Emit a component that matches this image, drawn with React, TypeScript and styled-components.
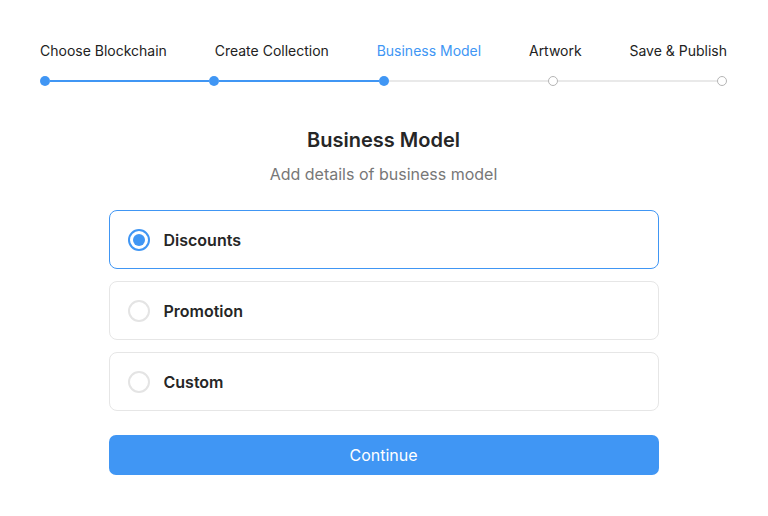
import { Fragment } from "react";
import styled, { createGlobalStyle } from "styled-components";

const BLUE = "#4096f4";

const GlobalStyle = createGlobalStyle`
  body {
    margin: 0;
    background: #ffffff;
    font-family: Inter, "Noto Sans", sans-serif;
    color: #222222;
  }
`;

const Page = styled.div`
  width: 768px;
  height: 516px;
  box-sizing: border-box;
  padding: 41px 41px 0 40px;
`;

const Labels = styled.div`
  display: flex;
  justify-content: space-between;
`;

const StepLabel = styled.span<{ $active: boolean }>`
  font-size: 14px;
  line-height: 20px;
  color: ${({ $active }) => ($active ? BLUE : "#222222")};
`;

const Track = styled.div`
  margin-top: 15px;
  height: 10px;
  display: flex;
  justify-content: space-between;
  align-items: center;
`;

const TrackLine = styled.div<{ $done: boolean }>`
  flex: 1;
  height: 2px;
  background: ${({ $done }) => ($done ? BLUE : "#e9e9e9")};
`;

const Dot = styled.div<{ $done: boolean }>`
  width: 10px;
  height: 10px;
  box-sizing: border-box;
  border-radius: 50%;
  flex-shrink: 0;
  background: ${({ $done }) => ($done ? BLUE : "#ffffff")};
  border: ${({ $done }) => ($done ? "none" : "1px solid #b5b5b5")};
`;

const Body = styled.div`
  width: 550px;
  margin: 42px auto 0;
  display: flex;
  flex-direction: column;
  align-items: center;
`;

const Title = styled.h2`
  margin: 0;
  font-size: 20px;
  line-height: 24px;
  font-weight: 600;
  color: #262626;
`;

const Subtitle = styled.p`
  margin: 12px 0 0;
  font-size: 16px;
  line-height: 20px;
  color: #777777;
`;

const Options = styled.div`
  margin-top: 26px;
  width: 100%;
  display: flex;
  flex-direction: column;
  gap: 12px;
`;

const Option = styled.label<{ $selected: boolean }>`
  display: flex;
  align-items: center;
  gap: 14px;
  height: 59px;
  box-sizing: border-box;
  padding: 0 18px;
  border-radius: 8px;
  border: 1px solid ${({ $selected }) => ($selected ? BLUE : "#e6e6e6")};
  cursor: pointer;
`;

const Radio = styled.span<{ $selected: boolean }>`
  width: 22px;
  height: 22px;
  box-sizing: border-box;
  border-radius: 50%;
  border: 2px solid ${({ $selected }) => ($selected ? BLUE : "#e4e4e4")};
  display: flex;
  align-items: center;
  justify-content: center;

  &::after {
    content: "";
    width: 12px;
    height: 12px;
    border-radius: 50%;
    background: ${({ $selected }) => ($selected ? BLUE : "transparent")};
  }
`;

const OptionText = styled.span`
  font-size: 16px;
  font-weight: 600;
  color: #262626;
`;

const ContinueButton = styled.button`
  margin-top: 24px;
  width: 100%;
  height: 40px;
  border: none;
  border-radius: 7px;
  background: ${BLUE};
  color: #ffffff;
  font-family: Inter, "Noto Sans", sans-serif;
  font-size: 16px;
  cursor: pointer;
`;

const steps = [
  "Choose Blockchain",
  "Create Collection",
  "Business Model",
  "Artwork",
  "Save & Publish",
];
const current = 2;

const options = ["Discounts", "Promotion", "Custom"];

export default function App() {
  return (
    <Page>
      <GlobalStyle />
      <Labels>
        {steps.map((s, i) => (
          <StepLabel key={s} $active={i === current}>
            {s}
          </StepLabel>
        ))}
      </Labels>
      <Track>
        {steps.map((s, i) => (
          <Fragment key={s}>
            {i > 0 && <TrackLine $done={i <= current} />}
            <Dot $done={i <= current} />
          </Fragment>
        ))}
      </Track>
      <Body>
        <Title>Business Model</Title>
        <Subtitle>Add details of business model</Subtitle>
        <Options>
          {options.map((o, i) => (
            <Option key={o} $selected={i === 0}>
              <Radio $selected={i === 0} />
              <OptionText>{o}</OptionText>
            </Option>
          ))}
        </Options>
        <ContinueButton>Continue</ContinueButton>
      </Body>
    </Page>
  );
}
